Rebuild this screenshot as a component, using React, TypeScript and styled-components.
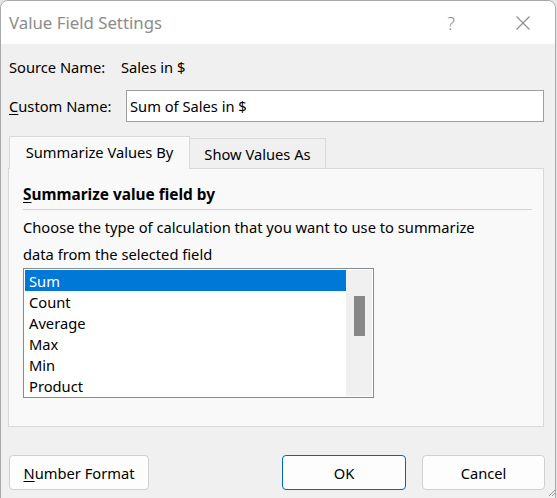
import styled, { createGlobalStyle } from 'styled-components';

const GlobalStyle = createGlobalStyle`
  html, body {
    margin: 0;
    padding: 0;
    background: #e6e6e6;
  }
  body {
    font-family: 'Noto Sans', 'Open Sans', sans-serif;
    font-size: 14.7px;
    color: #000;
  }
  * {
    box-sizing: border-box;
  }
`;

const Desktop = styled.div`
  position: relative;
  width: 557px;
  height: 498px;
  overflow: hidden;
  display: flex;
`;

const Window = styled.div`
  width: 556px;
  height: 520px;
  display: flex;
  flex-direction: column;
  background: #f0f0f0;
  border: 1px solid #a8a8a8;
  border-radius: 8px 8px 0 0;
  overflow: hidden;
`;

const TitleBar = styled.div`
  flex-shrink: 0;
  height: 43px;
  display: flex;
  align-items: center;
  background: #fff;
  padding-left: 8px;
`;

const Title = styled.div`
  flex: 1;
  font-size: 16.8px;
  color: #8c8c8c;
`;

const TitleButton = styled.button<{ $w: number }>`
  width: ${(p) => p.$w}px;
  height: 43px;
  display: flex;
  align-items: center;
  justify-content: center;
  background: none;
  border: none;
  padding: 0;
  color: #8c8c8c;
  font-family: 'Noto Sans', sans-serif;
  font-size: 18px;
  font-weight: 300;
`;

const Body = styled.div`
  display: flex;
  flex-direction: column;
  padding: 0 7px;
  width: 550px;
`;

const FieldRow = styled.div<{ $h: number }>`
  display: flex;
  align-items: center;
  height: ${(p) => p.$h}px;
  padding-left: 1px;
`;

const Label = styled.div<{ $w: number }>`
  width: ${(p) => p.$w}px;
  flex-shrink: 0;
`;

const Underlined = styled.span`
  text-decoration: underline;
  text-underline-offset: 2px;
`;

const TextInput = styled.div`
  width: 419px;
  height: 32px;
  border: 1px solid #a0a0a0;
  background: #fff;
  display: flex;
  align-items: center;
  padding-left: 3px;
`;

const TabStrip = styled.div`
  display: flex;
  align-items: flex-end;
  margin-top: 14px;
  height: 33px;
  padding-left: 1px;
  position: relative;
  z-index: 1;
`;

const Tab = styled.div<{ $active?: boolean; $w: number }>`
  width: ${(p) => p.$w}px;
  height: ${(p) => (p.$active ? 33 : 31)}px;
  padding-bottom: ${(p) => (p.$active ? 2 : 0)}px;
  display: flex;
  align-items: center;
  justify-content: center;
  background: ${(p) => (p.$active ? '#f9f9f9' : '#f0f0f0')};
  border: 1px solid #d9d9d9;
  border-bottom: ${(p) => (p.$active ? 'none' : '1px solid #d9d9d9')};
  margin-left: ${(p) => (p.$active ? 0 : -1)}px;
`;

const Panel = styled.div`
  width: 536px;
  height: 259px;
  margin-top: -1px;
  background: #f9f9f9;
  border: 1px solid #d9d9d9;
  padding: 0 11px 0 14px;
  display: flex;
  flex-direction: column;
`;

const Heading = styled.div`
  font-size: 15.4px;
  font-weight: 700;
  height: 41px;
  display: flex;
  align-items: center;
  padding-top: 10px;
  border-bottom: 1px solid #d4d4d4;
`;

const Description = styled.div`
  line-height: 27px;
  margin-top: 4px;
`;

const ListBox = styled.div`
  width: 351px;
  height: 130px;
  border: 1px solid #868a91;
  background: #fff;
  padding: 1px;
  display: flex;
`;

const Items = styled.div`
  flex: 1;
  display: flex;
  flex-direction: column;
`;

const Item = styled.div<{ $selected?: boolean }>`
  height: 21px;
  flex-shrink: 0;
  display: flex;
  align-items: center;
  padding-left: 4px;
  background: ${(p) => (p.$selected ? '#0078d7' : 'transparent')};
  color: ${(p) => (p.$selected ? '#fff' : '#000')};
`;

const ScrollTrack = styled.div`
  width: 26px;
  background: #f0f0f0;
  display: flex;
  justify-content: center;
  padding-top: 26px;
`;

const ScrollThumb = styled.div`
  width: 11px;
  height: 40px;
  background: #878787;
`;

const ButtonRow = styled.div`
  display: flex;
  align-items: center;
  margin-top: 28px;
  padding-left: 1px;
  width: 537px;
`;

const Button = styled.button<{ $w: number; $default?: boolean }>`
  width: ${(p) => p.$w}px;
  height: 35px;
  background: #fdfdfd;
  border: 1px solid ${(p) => (p.$default ? '#0067c0' : '#d0d0d0')};
  border-radius: 4px;
  font-family: inherit;
  font-size: 14.7px;
  color: #000;
  padding: 0;
`;

const Spacer = styled.div`
  flex: 1;
`;

const Gap = styled.div<{ $w: number }>`
  width: ${(p) => p.$w}px;
  flex-shrink: 0;
`;

const Grip = styled.svg`
  position: absolute;
  right: 1px;
  bottom: 1px;
`;

const items = ['Sum', 'Count', 'Average', 'Max', 'Min', 'Product'];

export default function App() {
  return (
    <Desktop>
      <GlobalStyle />
      <Window>
        <TitleBar>
          <Title>Value Field Settings</Title>
          <TitleButton $w={30}>?</TitleButton>
          <Gap $w={34} />
          <TitleButton $w={46}>
            <svg width="16" height="16" viewBox="0 0 16 16">
              <path d="M1.5 1.5 L14.5 14.5 M14.5 1.5 L1.5 14.5" stroke="#8c8c8c" strokeWidth="1.1" fill="none" />
            </svg>
          </TitleButton>
          <Gap $w={9} />
        </TitleBar>
        <Body>
          <FieldRow $h={46}>
            <Label $w={112}>Source Name:</Label>
            <div>Sales in $</div>
          </FieldRow>
          <FieldRow $h={32}>
            <Label $w={117}>
              <Underlined>C</Underlined>ustom Name:
            </Label>
            <TextInput>Sum of Sales in $</TextInput>
          </FieldRow>
          <TabStrip>
            <Tab $active $w={181}>
              Summarize Values By
            </Tab>
            <Tab $w={137}>Show Values As</Tab>
          </TabStrip>
          <Panel>
            <Heading>
              <span>
                <Underlined>S</Underlined>ummarize value field by
              </span>
            </Heading>
            <Description>
              Choose the type of calculation that you want to use to summarize
              <br />
              data from the selected field
            </Description>
            <ListBox>
              <Items>
                {items.map((name, i) => (
                  <Item key={name} $selected={i === 0}>
                    {name}
                  </Item>
                ))}
              </Items>
              <ScrollTrack>
                <ScrollThumb />
              </ScrollTrack>
            </ListBox>
          </Panel>
          <ButtonRow>
            <Button $w={140}>
              <Underlined>N</Underlined>umber Format
            </Button>
            <Spacer />
            <Button $w={124} $default>
              OK
            </Button>
            <Gap $w={16} />
            <Button $w={123}>Cancel</Button>
          </ButtonRow>
        </Body>
      </Window>
      <Grip width="10" height="10" viewBox="0 0 10 10">
        <path d="M9 3 L3 9 M9 6 L6 9" stroke="#9a9a9a" strokeWidth="1" />
      </Grip>
    </Desktop>
  );
}
